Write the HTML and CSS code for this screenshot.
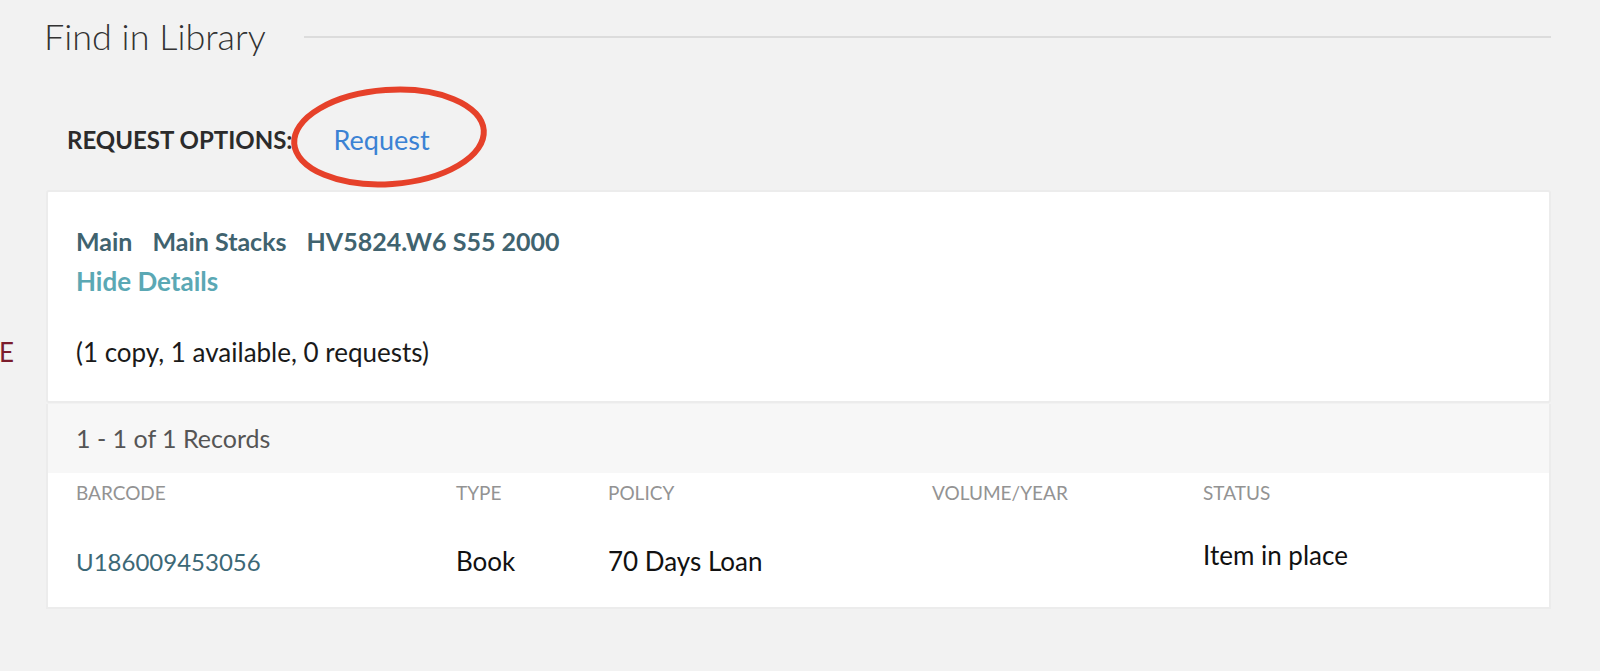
FILE: index.html
```html
<!DOCTYPE html>
<html lang="en-US">
<head>
    <title>Find in Library</title>

    <link rel="stylesheet" href="styles.css">
</head>
<body>

    <div class="site">

        <div class="find">
            <div class="find__header">
                <h2 class="find__title">Find in Library</h2>
                <div class="find__rule"></div>
            </div>

            <div class="request">
                <span class="request__label">REQUEST OPTIONS:</span>
                <a class="request__link" href="#">Request</a>
                <svg class="request__mark" width="204" height="108" viewBox="0 0 204 108">
                    <ellipse cx="102" cy="54" rx="95" ry="47" fill="none" stroke="#e6412a" stroke-width="6" transform="rotate(-4 102 54)"/>
                </svg>
            </div>

            <div class="holding">
                <div class="holding__location">
                    <span>Main</span>
                    <span>Main Stacks</span>
                    <span>HV5824.W6 S55 2000</span>
                </div>
                <a class="holding__toggle" href="#">Hide Details</a>
                <div class="holding__copies">
                    <span class="holding__edge">E</span>
                    (1 copy, 1 available, 0 requests)
                </div>
            </div>

            <div class="items">
                <div class="items__count">1 - 1 of 1 Records</div>
                <table class="items__table">
                    <thead>
                        <tr>
                            <th class="col-barcode">Barcode</th>
                            <th class="col-type">Type</th>
                            <th class="col-policy">Policy</th>
                            <th class="col-volume">Volume/Year</th>
                            <th class="col-status">Status</th>
                        </tr>
                    </thead>
                    <tbody>
                        <tr>
                            <td><a class="items__barcode" href="#">U186009453056</a></td>
                            <td>Book</td>
                            <td>70 Days Loan</td>
                            <td></td>
                            <td class="items__status">Item in place</td>
                        </tr>
                    </tbody>
                </table>
            </div>
        </div>

    </div>

</body>
</html>
```

FILE: styles.css
```css
* {
    box-sizing: border-box;
}

body {
    background-color: #f2f2f2;
    color: #1a1a1a;
    margin: 0;
    padding: 0;
    font-family: "Lato", "Open Sans", sans-serif;
    font-size: 26px;
    line-height: 1.3;
}

a {
    text-decoration: none;
}

.site {
    padding: 10px 49px 0 46px;
}

.find__header {
    display: flex;
    align-items: center;
    height: 56px;
}

.find__title {
    margin: 0 0 0 -2px;
    font-size: 36px;
    font-weight: 300;
    color: #333;
    line-height: 1;
    padding-bottom: 4px;
}

.find__rule {
    flex: 1;
    height: 2px;
    background-color: #dcdcdc;
    margin-left: 38px;
    margin-bottom: 2px;
}

.request {
    position: relative;
    display: flex;
    align-items: center;
    height: 124px;
    padding-left: 21px;
    padding-top: 24px;
}

.request__label {
    font-weight: 700;
    font-size: 24px;
    color: #2b2b2b;
}

.request__link {
    font-size: 27px;
    color: #3b82d4;
    margin-left: 41px;
}

.request__mark {
    position: absolute;
    left: 241px;
    top: 17px;
}

.holding {
    background-color: #fff;
    border: 2px solid #ececec;
    border-radius: 3px;
    padding: 33px 28px 31px;
}

.holding__location {
    display: flex;
    gap: 20px;
    font-size: 25px;
    font-weight: 700;
    color: #40636f;
}

.holding__toggle {
    display: block;
    margin-top: 7px;
    font-weight: 700;
    color: #5ba8b4;
}

.holding__copies {
    position: relative;
    margin-top: 38px;
    color: #1a1a1a;
}

.holding__edge {
    position: absolute;
    left: -77px;
    color: #7b1c2c;
}

.items {
    background-color: #fff;
    border: 2px solid #ececec;
    border-top: 0;
    margin-top: 1px;
}

.items__count {
    background-color: #f7f7f7;
    color: #555;
    font-size: 25px;
    padding: 18px 28px 18px;
}

.items__table {
    width: 100%;
    border-collapse: collapse;
}

.items__table th {
    text-align: left;
    font-size: 19px;
    font-weight: 400;
    color: #939393;
    text-transform: uppercase;
    padding: 8px 0 0;
}

.items__table td {
    padding: 40px 0 28px;
    color: #111;
}

.items__table th:first-child,
.items__table td:first-child {
    padding-left: 28px;
}

.col-barcode {
    width: 408px;
}

.col-type {
    width: 152px;
}

.col-policy {
    width: 324px;
}

.col-volume {
    width: 271px;
}

.items__barcode {
    font-size: 24px;
    color: #3c6876;
}

.items__status {
    vertical-align: top;
    padding-top: 34px !important;
}
```
